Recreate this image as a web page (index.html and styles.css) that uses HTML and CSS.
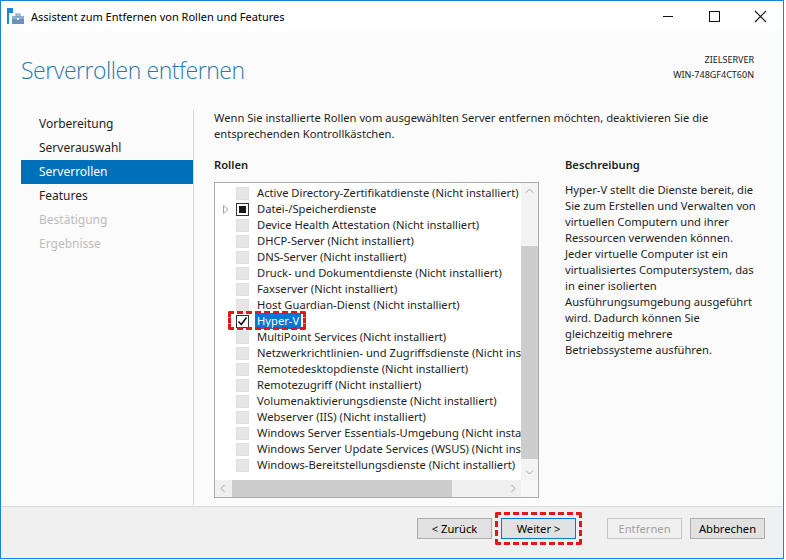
FILE: index.html
```html
<!DOCTYPE html>
<html lang="de">
<head>
    <meta charset="UTF-8">
    <title>Assistent zum Entfernen von Rollen und Features</title>
    <link rel="stylesheet" href="styles.css">
</head>
<body>

<div class="fenster">
    <div class="titelleiste">
        <svg class="app-icon" width="17" height="17" viewBox="0 0 17 17">
            <rect x="0" y="0" width="6" height="5" fill="#1c86d8"/>
            <rect x="0" y="0" width="2" height="16" fill="#1c86d8"/>
            <rect x="5" y="8" width="12" height="8" fill="#6d8fb8"/>
            <rect x="5" y="8" width="12" height="3" fill="#8fb0d6"/>
            <rect x="9" y="6" width="4" height="2" fill="none" stroke="#6d8fb8" stroke-width="1"/>
            <rect x="10" y="10" width="2" height="2" fill="#e8eef6"/>
        </svg>
        <span class="titel">Assistent zum Entfernen von Rollen und Features</span>
        <div class="steuerung">
            <svg width="46" height="30" viewBox="0 0 46 30"><path d="M18 15.5h10" stroke="#111" stroke-width="1"/></svg>
            <svg width="46" height="30" viewBox="0 0 46 30"><rect x="18.5" y="10.5" width="10" height="10" fill="none" stroke="#111" stroke-width="1"/></svg>
            <svg width="46" height="30" viewBox="0 0 46 30"><path d="M18 10l11 11M29 10l-11 11" stroke="#111" stroke-width="1.1"/></svg>
        </div>
    </div>

    <div class="kopf">
        <h1>Serverrollen entfernen</h1>
        <div class="ziel">
            <div>ZIELSERVER</div>
            <div>WIN-748GF4CT60N</div>
        </div>
    </div>

    <div class="haupt">
        <nav class="schritte">
            <div class="schritt">Vorbereitung</div>
            <div class="schritt">Serverauswahl</div>
            <div class="schritt aktiv">Serverrollen</div>
            <div class="schritt">Features</div>
            <div class="schritt aus">Bestätigung</div>
            <div class="schritt aus">Ergebnisse</div>
        </nav>

        <div class="inhalt">
            <p class="hinweis">Wenn Sie installierte Rollen vom ausgewählten Server entfernen möchten, deaktivieren Sie die<br>entsprechenden Kontrollkästchen.</p>

            <div class="spalten">
                <div class="rollen">
                    <h2>Rollen</h2>
                    <div class="liste">
                        <div class="eintraege">
                            <div class="zeile"><span class="pfeil"></span><span class="box"></span><span class="name">Active Directory-Zertifikatdienste (Nicht installiert)</span></div>
                            <div class="zeile"><span class="pfeil"><svg width="6" height="9" viewBox="0 0 6 9"><path d="M0.5 0.5L5 4.5 0.5 8.5z" fill="none" stroke="#a6a6a6"/></svg></span><span class="box teil"></span><span class="name">Datei-/Speicherdienste</span></div>
                            <div class="zeile"><span class="pfeil"></span><span class="box"></span><span class="name">Device Health Attestation (Nicht installiert)</span></div>
                            <div class="zeile"><span class="pfeil"></span><span class="box"></span><span class="name">DHCP-Server (Nicht installiert)</span></div>
                            <div class="zeile"><span class="pfeil"></span><span class="box"></span><span class="name">DNS-Server (Nicht installiert)</span></div>
                            <div class="zeile"><span class="pfeil"></span><span class="box"></span><span class="name">Druck- und Dokumentdienste (Nicht installiert)</span></div>
                            <div class="zeile"><span class="pfeil"></span><span class="box"></span><span class="name">Faxserver (Nicht installiert)</span></div>
                            <div class="zeile"><span class="pfeil"></span><span class="box"></span><span class="name">Host Guardian-Dienst (Nicht installiert)</span></div>
                            <div class="zeile markiert">
                                <span class="pfeil"></span>
                                <span class="box an"><svg width="11" height="11" viewBox="0 0 11 11"><path d="M1.5 5.5l2.8 3L9.5 1.5" fill="none" stroke="#111" stroke-width="1.6"/></svg></span>
                                <span class="name">Hyper-V</span>
                                <span class="rahmen"></span>
                            </div>
                            <div class="zeile"><span class="pfeil"></span><span class="box"></span><span class="name">MultiPoint Services (Nicht installiert)</span></div>
                            <div class="zeile"><span class="pfeil"></span><span class="box"></span><span class="name">Netzwerkrichtlinien- und Zugriffsdienste (Nicht installiert)</span></div>
                            <div class="zeile"><span class="pfeil"></span><span class="box"></span><span class="name">Remotedesktopdienste (Nicht installiert)</span></div>
                            <div class="zeile"><span class="pfeil"></span><span class="box"></span><span class="name">Remotezugriff (Nicht installiert)</span></div>
                            <div class="zeile"><span class="pfeil"></span><span class="box"></span><span class="name">Volumenaktivierungsdienste (Nicht installiert)</span></div>
                            <div class="zeile"><span class="pfeil"></span><span class="box"></span><span class="name">Webserver (IIS) (Nicht installiert)</span></div>
                            <div class="zeile"><span class="pfeil"></span><span class="box"></span><span class="name">Windows Server Essentials-Umgebung (Nicht installiert)</span></div>
                            <div class="zeile"><span class="pfeil"></span><span class="box"></span><span class="name">Windows Server Update Services (WSUS) (Nicht installiert)</span></div>
                            <div class="zeile"><span class="pfeil"></span><span class="box"></span><span class="name">Windows-Bereitstellungsdienste (Nicht installiert)</span></div>
                        </div>
                        <div class="vleiste">
                            <svg width="17" height="16" viewBox="0 0 17 16"><path d="M5 9.5l3.5-3.5 3.5 3.5" fill="none" stroke="#a3a3a3"/></svg>
                            <div class="vspur"><div class="vdaumen"></div></div>
                            <svg width="17" height="16" viewBox="0 0 17 16"><path d="M5 6.5l3.5 3.5 3.5-3.5" fill="none" stroke="#a3a3a3"/></svg>
                        </div>
                        <div class="hleiste">
                            <svg width="16" height="17" viewBox="0 0 16 17"><path d="M9.5 5L6 8.5l3.5 3.5" fill="none" stroke="#a3a3a3"/></svg>
                            <div class="hspur"><div class="hdaumen"></div></div>
                            <svg width="16" height="17" viewBox="0 0 16 17"><path d="M6.5 5L10 8.5 6.5 12" fill="none" stroke="#a3a3a3"/></svg>
                        </div>
                        <div class="ecke"></div>
                    </div>
                </div>

                <div class="beschreibung">
                    <h2>Beschreibung</h2>
                    <p>Hyper-V stellt die Dienste bereit, die<br>Sie zum Erstellen und Verwalten von<br>virtuellen Computern und ihrer<br>Ressourcen verwenden können.<br>Jeder virtuelle Computer ist ein<br>virtualisiertes Computersystem, das<br>in einer isolierten<br>Ausführungsumgebung ausgeführt<br>wird. Dadurch können Sie<br>gleichzeitig mehrere<br>Betriebssysteme ausführen.</p>
                </div>
            </div>
        </div>
    </div>

    <div class="fuss">
        <button class="knopf">&lt; Zurück</button>
        <button class="knopf fokus">Weiter &gt;<span class="rahmen"></span></button>
        <button class="knopf" disabled>Entfernen</button>
        <button class="knopf">Abbrechen</button>
    </div>
</div>

</body>
</html>
```

FILE: styles.css
```css
body {
    margin: 0;
    background: #ffffff;
    font-family: "Noto Sans", sans-serif;
    font-size: 11.2px;
    color: #1e1e1e;
}
.fenster {
    width: 782px;
    height: 557px;
    border: 1px solid #1883d7;
    background: #fbfbfb;
    display: flex;
    flex-direction: column;
}
.titelleiste {
    height: 30px;
    background: #ffffff;
    display: flex;
    align-items: center;
}
.app-icon {
    margin-left: 6px;
    margin-top: 1px;
}
.titel {
    margin-left: 7px;
    font-size: 11px;
    color: #000000;
}
.steuerung {
    margin-left: auto;
    display: flex;
}
.steuerung svg {
    display: block;
}
.kopf {
    height: 69px;
    display: flex;
    justify-content: space-between;
    align-items: flex-start;
    padding: 0 29px 0 20px;
}
h1 {
    margin: 23px 0 0 0;
    font-family: "Open Sans", sans-serif;
    font-weight: 300;
    font-size: 23px;
    color: #2b79ab;
    letter-spacing: -0.45px;
}
.ziel {
    margin-top: 21px;
    text-align: right;
    font-size: 9px;
    line-height: 15px;
    color: #1a1a1a;
}
.haupt {
    flex: 1;
    display: flex;
}
.schritte {
    width: 192px;
    margin-top: 10px;
    padding-top: 2px;
    height: 393px;
    border-right: 1px solid #d6d6d6;
}
.schritt {
    margin-left: 20px;
    height: 24px;
    line-height: 24px;
    padding-left: 18px;
    font-size: 12px;
}
.schritt.aktiv {
    background: #0070bb;
    color: #ffffff;
}
.schritt.aus {
    color: #bdbdbd;
}
.inhalt {
    margin-left: 20px;
    padding-top: 10px;
}
.hinweis {
    margin: 0;
    line-height: 16px;
}
.spalten {
    display: flex;
    margin-top: 15px;
}
h2 {
    margin: 0 0 9px 0;
    font-size: 11.2px;
    font-weight: 600;
    line-height: 16px;
}
.rollen {
    width: 325px;
}
.liste {
    border: 1px solid #a9abae;
    background: #ffffff;
    height: 314px;
    display: grid;
    grid-template-columns: minmax(0, 1fr) 17px;
    grid-template-rows: 1fr 17px;
    overflow: hidden;
}
.eintraege {
    padding-top: 2px;
    overflow: hidden;
}
.zeile {
    position: relative;
    height: 16px;
    display: flex;
    align-items: center;
    white-space: nowrap;
    padding-left: 6px;
}
.pfeil {
    flex: none;
    width: 15px;
    height: 16px;
    display: flex;
    align-items: center;
    padding-left: 2px;
    box-sizing: border-box;
}
.box {
    width: 13px;
    height: 13px;
    box-sizing: border-box;
    background: #e6e6e6;
    border: 1px solid #e0e0e0;
    flex: none;
    display: flex;
    align-items: center;
    justify-content: center;
}
.box.teil {
    background: #ffffff;
    border-color: #333333;
}
.box.teil::after {
    content: "";
    width: 7px;
    height: 7px;
    background: #1a1a1a;
}
.box.an {
    background: #ffffff;
    border-color: #333333;
}
.name {
    flex: none;
    margin-left: 6px;
    padding: 0 2px;
    line-height: 16px;
}
.markiert .name {
    background: #0078d7;
    color: #ffffff;
}
.zeile .rahmen {
    position: absolute;
    left: 13px;
    top: -2px;
    width: 78px;
    height: 19px;
    box-sizing: border-box;
    border: 3px dashed #e4161b;
    border-radius: 2px;
}
.vleiste {
    background: #f3f3f3;
    display: flex;
    flex-direction: column;
}
.vspur {
    flex: 1;
    padding-top: 47px;
}
.vdaumen {
    height: 213px;
    background: #cdcdcd;
}
.hleiste {
    background: #f0f0f0;
    display: flex;
    align-items: stretch;
}
.hspur {
    flex: 1;
    padding-left: 1px;
    padding-right: 53px;
}
.hdaumen {
    height: 17px;
    background: #cdcdcd;
}
.ecke {
    background: #f7f7f7;
}
.beschreibung {
    margin-left: 26px;
    width: 205px;
}
.beschreibung p {
    margin: 0;
    line-height: 16px;
    margin-top: 2px;
}
.fuss {
    height: 40px;
    border-top: 1px solid #dadada;
    background: #f0f0f0;
    display: flex;
    align-items: flex-start;
    padding: 11px 0 0 416px;
}
.knopf {
    position: relative;
    width: 75px;
    height: 21px;
    margin-right: 8px;
    font-family: "Noto Sans", sans-serif;
    font-size: 11.2px;
    color: #000000;
    background: #e1e1e1;
    border: 1px solid #adadad;
    padding: 0;
}
.knopf:first-child {
    margin-right: 9px;
}
.knopf.fokus {
    border-color: #0078d7;
    margin-right: 31px;
}
.knopf:disabled {
    background: #f0f0f0;
    border-color: #c6c6c6;
    color: #a0a0a0;
}
.knopf .rahmen {
    position: absolute;
    left: -7px;
    top: -7px;
    right: -7px;
    bottom: -7px;
    border: 3px dashed #e4161b;
    border-radius: 2px;
}
```
